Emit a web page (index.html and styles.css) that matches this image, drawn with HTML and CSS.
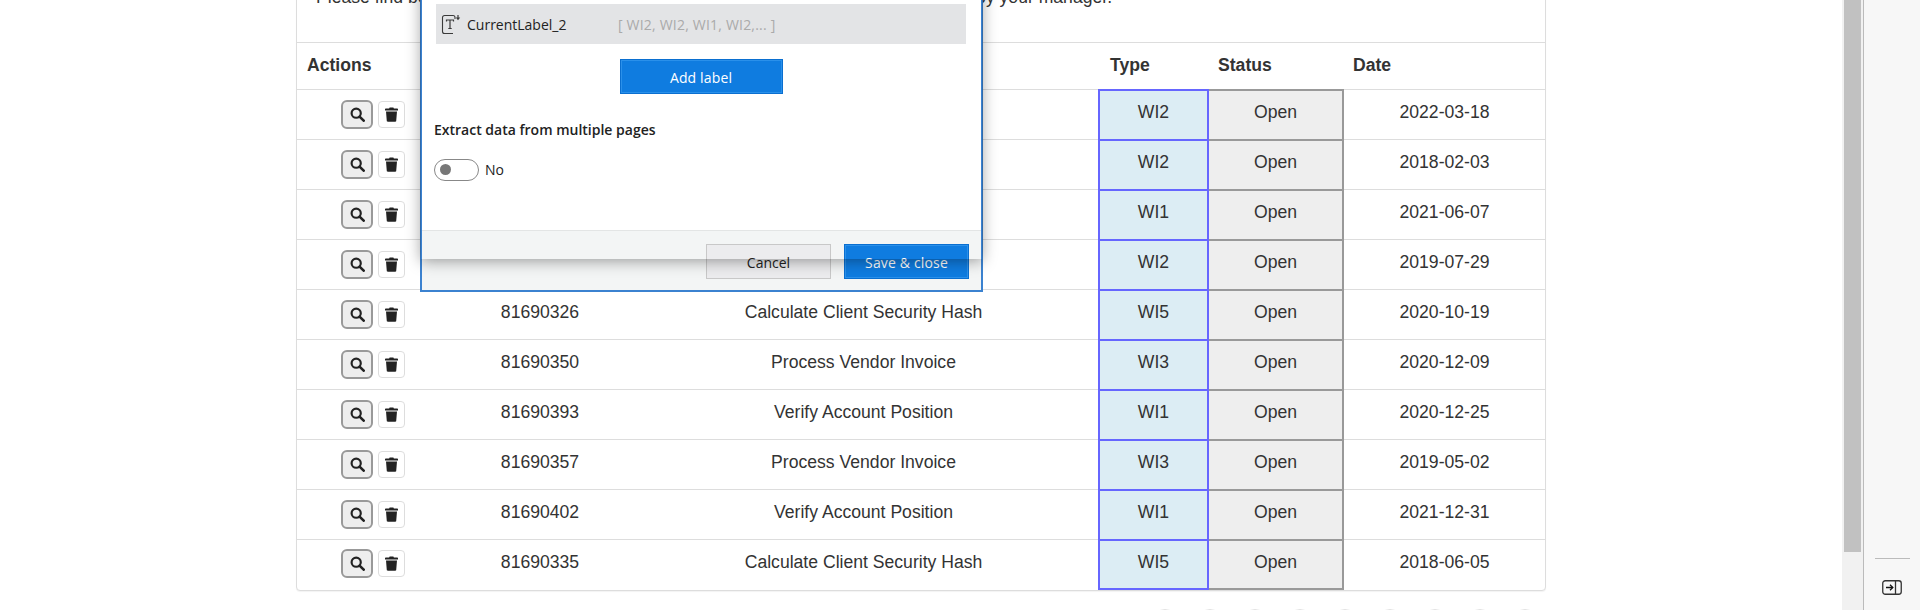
FILE: index.html
```html
<!DOCTYPE html>
<html lang="en">
<head>
<meta charset="UTF-8" />
<meta name="viewport" content="width=device-width, initial-scale=1" />
<title>Work Items</title>
<link rel="stylesheet" href="styles.css">
</head>
<body>

<svg class="icon-defs" aria-hidden="true">
  <symbol id="i-search" viewBox="0 0 16 16">
    <circle cx="6.6" cy="6.6" r="4.9" fill="none" stroke="currentColor" stroke-width="2.3" />
    <path d="M10.2 10.2 14.6 14.6" fill="none" stroke="currentColor" stroke-width="2.8" stroke-linecap="round" />
  </symbol>
  <symbol id="i-trash" viewBox="0 0 14 16">
    <path d="M5 0.4h4l0.6 1.2h3.6c0.5 0 0.8 0.3 0.8 0.8v1.3H0v-1.3c0-0.5 0.3-0.8 0.8-0.8h3.6z" fill="currentColor" />
    <path d="M1.1 4.7h11.8l-0.8 10c0 0.6-0.5 1-1 1H2.900c-0.500 0-1-0.400-1-1z" fill="currentColor" />
  </symbol>
</svg>

<div class="app">
  <main class="content">
    <div class="panel">
      <p class="intro">Please find below the list of all work items which were reviewed and assigned to you by your manager.</p>
      <table class="items">
        <colgroup>
          <col class="c-actions"><col class="c-id"><col class="c-name"><col class="c-type"><col class="c-status"><col class="c-date">
        </colgroup>
        <thead>
          <tr><th>Actions</th><th>ID</th><th>Name</th><th class="th-type">Type</th><th>Status</th><th>Date</th></tr>
        </thead>
        <tbody>
          <tr>
            <td><div class="actions"><button class="btn-view"><svg class="ico-search"><use href="#i-search" /></svg></button><button class="btn-del"><svg class="ico-trash"><use href="#i-trash" /></svg></button></div></td>
            <td>81690311</td><td>Process Vendor Invoice</td><td class="type">WI2</td><td class="status">Open</td><td>2022-03-18</td>
          </tr>
          <tr>
            <td><div class="actions"><button class="btn-view"><svg class="ico-search"><use href="#i-search" /></svg></button><button class="btn-del"><svg class="ico-trash"><use href="#i-trash" /></svg></button></div></td>
            <td>81690318</td><td>Process Vendor Invoice</td><td class="type">WI2</td><td class="status">Open</td><td>2018-02-03</td>
          </tr>
          <tr>
            <td><div class="actions"><button class="btn-view"><svg class="ico-search"><use href="#i-search" /></svg></button><button class="btn-del"><svg class="ico-trash"><use href="#i-trash" /></svg></button></div></td>
            <td>81690384</td><td>Verify Account Position</td><td class="type">WI1</td><td class="status">Open</td><td>2021-06-07</td>
          </tr>
          <tr>
            <td><div class="actions"><button class="btn-view"><svg class="ico-search"><use href="#i-search" /></svg></button><button class="btn-del"><svg class="ico-trash"><use href="#i-trash" /></svg></button></div></td>
            <td>81690342</td><td>Process Vendor Invoice</td><td class="type">WI2</td><td class="status">Open</td><td>2019-07-29</td>
          </tr>
          <tr>
            <td><div class="actions"><button class="btn-view"><svg class="ico-search"><use href="#i-search" /></svg></button><button class="btn-del"><svg class="ico-trash"><use href="#i-trash" /></svg></button></div></td>
            <td>81690326</td><td>Calculate Client Security Hash</td><td class="type">WI5</td><td class="status">Open</td><td>2020-10-19</td>
          </tr>
          <tr>
            <td><div class="actions"><button class="btn-view"><svg class="ico-search"><use href="#i-search" /></svg></button><button class="btn-del"><svg class="ico-trash"><use href="#i-trash" /></svg></button></div></td>
            <td>81690350</td><td>Process Vendor Invoice</td><td class="type">WI3</td><td class="status">Open</td><td>2020-12-09</td>
          </tr>
          <tr>
            <td><div class="actions"><button class="btn-view"><svg class="ico-search"><use href="#i-search" /></svg></button><button class="btn-del"><svg class="ico-trash"><use href="#i-trash" /></svg></button></div></td>
            <td>81690393</td><td>Verify Account Position</td><td class="type">WI1</td><td class="status">Open</td><td>2020-12-25</td>
          </tr>
          <tr>
            <td><div class="actions"><button class="btn-view"><svg class="ico-search"><use href="#i-search" /></svg></button><button class="btn-del"><svg class="ico-trash"><use href="#i-trash" /></svg></button></div></td>
            <td>81690357</td><td>Process Vendor Invoice</td><td class="type">WI3</td><td class="status">Open</td><td>2019-05-02</td>
          </tr>
          <tr>
            <td><div class="actions"><button class="btn-view"><svg class="ico-search"><use href="#i-search" /></svg></button><button class="btn-del"><svg class="ico-trash"><use href="#i-trash" /></svg></button></div></td>
            <td>81690402</td><td>Verify Account Position</td><td class="type">WI1</td><td class="status">Open</td><td>2021-12-31</td>
          </tr>
          <tr>
            <td><div class="actions"><button class="btn-view"><svg class="ico-search"><use href="#i-search" /></svg></button><button class="btn-del"><svg class="ico-trash"><use href="#i-trash" /></svg></button></div></td>
            <td>81690335</td><td>Calculate Client Security Hash</td><td class="type">WI5</td><td class="status">Open</td><td>2018-06-05</td>
          </tr>
        </tbody>
      </table>
    </div>
    <div class="pager">
      <span></span><span></span><span></span><span></span><span></span><span></span><span></span><span></span><span></span>
    </div>

    <div class="dialog">
      <div class="dialog-body">
        <div class="label-row">
          <svg class="ico-label" viewBox="0 0 20 21" fill="none" stroke="#3a3a3a">
            <path d="M14 5V3.500a2 2 0 0 0-2-2H3.500a2 2 0 0 0-2 2v14a2 2 0 0 0 2 2H12" stroke-width="1.100" />
            <path d="M5.500 7.500V6h7v1.500M9 6v8.500M7.300 14.500h3.400" stroke-width="1.200" />
            <path d="M17 1v3" stroke-width="1.200" />
            <path d="M14.800 3.500h4.400L17 6.200z" fill="#3a3a3a" stroke="none" />
          </svg>
          <span class="label-name">CurrentLabel_2</span>
          <span class="label-values">[ WI2, WI2, WI1, WI2,... ]</span>
        </div>
        <div class="add-wrap"><button class="btn-primary btn-add">Add label</button></div>
        <div class="field-title">Extract data from multiple pages</div>
        <div class="toggle-row">
          <span class="toggle"><span class="knob"></span></span>
          <span class="toggle-text">No</span>
        </div>
      </div>
      <div class="dialog-foot">
        <button class="btn-cancel">Cancel</button>
        <button class="btn-primary btn-save">Save &amp; close</button>
      </div>
      <div class="dialog-shade"></div>
    </div>
  </main>

  <div class="scrollbar"><div class="thumb"></div></div>

  <aside class="sidebar">
    <div class="side-rule"></div>
    <svg class="ico-collapse" viewBox="0 0 20 15" fill="none" stroke="#333">
      <rect x="0.750" y="0.750" width="18.500" height="13.500" rx="2.500" stroke-width="1.300" />
      <path d="M13.500 1v13" stroke-width="1.300" />
      <path d="M4 7.500h6.500" stroke="#111" stroke-width="1.500" />
      <path d="M8 4.800l2.800 2.700L8 10.200" stroke="#111" stroke-width="1.300" />
    </svg>
  </aside>
</div>

</body>
</html>
```

FILE: styles.css
```css
html, body {
  margin: 0;
  height: 100%;
  overflow: hidden;
}

body {
  font-family: "Liberation Sans", Arial, sans-serif;
  font-size: 17.6px;
  line-height: 22px;
  color: #333;
  background: #fff;
}

.icon-defs {
  display: none;
}

.app {
  display: flex;
  height: 610px;
}

.content {
  position: relative;
  flex: 1;
  min-width: 0;
  overflow: hidden;
}

/* page is scrolled a bit, the intro line is cut off on top */
.panel {
  width: 1248px;
  margin: -30px 0 0 296px;
  background: #fff;
  border: 1px solid #ddd;
  border-radius: 4px;
  box-shadow: 0 1px 1px rgba(0, 0, 0, 0.05);
}

.intro {
  margin: 0;
  height: 71px;
  padding: 15px 19px 0;
  box-sizing: border-box;
}

.items {
  width: 100%;
  table-layout: fixed;
  border-collapse: collapse;
}

.c-actions { width: 154px; }
.c-id { width: 178px; }
.c-name { width: 470px; }
.c-type { width: 109px; }
.c-status { width: 135px; }
.c-date { width: 202px; }

.items th {
  height: 47px;
  padding: 0 10px 2px;
  box-sizing: border-box;
  text-align: left;
  font-weight: 700;
  border-top: 1px solid #ddd;
  border-bottom: 1px solid #ddd;
}

.items th.th-type {
  padding-left: 11px;
}

.items td {
  height: 50px;
  padding: 0 10px 5px;
  box-sizing: border-box;
  text-align: center;
  border-top: 1px solid #ddd;
}

.items tr:last-child td {
  height: 49px;
  padding-bottom: 4px;
}

.items td:first-child,
.items tr:last-child td:first-child {
  padding: 0 12px 1px 10px;
}

.items td.type {
  background: #dcedf4;
  border: 2px solid #6666ff;
}

.items td.status {
  background: #eee;
  border: 2px solid #999;
}

.actions {
  display: flex;
  justify-content: center;
  align-items: center;
  gap: 5px;
}

.actions button {
  display: flex;
  align-items: center;
  justify-content: center;
  padding: 0;
  color: #222;
}

.btn-view {
  width: 32px;
  height: 29px;
  background: #eee;
  border: 2px solid #999;
  border-radius: 6px;
}

.btn-del {
  width: 27px;
  height: 27px;
  background: #fff;
  border: 1px solid #ddd;
  border-radius: 4px;
}

.ico-search {
  width: 15px;
  height: 15px;
}

.ico-trash {
  width: 13px;
  height: 15px;
}

.pager {
  display: flex;
  justify-content: flex-end;
  gap: 15px;
  width: 1244px;
  margin: 18px 0 0 296px;
}

.pager span {
  width: 28px;
  height: 28px;
  flex: none;
  border: 1px solid #e2e2e2;
  border-radius: 50%;
}

/* dialog sits over the table */
.dialog {
  position: absolute;
  top: 0;
  left: 420px;
  width: 563px;
  height: 292px;
  box-sizing: border-box;
  display: flex;
  flex-direction: column;
  background: #fff;
  border: 2px solid #3b82d0;
  border-top: none;
  font-family: "Open Sans", "Noto Sans", sans-serif;
  font-size: 14px;
  color: #222;
}

.dialog-body {
  flex: 1;
  padding: 4px 15px 0 12px;
}

.label-row {
  display: flex;
  align-items: center;
  height: 40px;
  margin-left: 2px;
  background: #e3e4e6;
}

.ico-label {
  width: 20px;
  height: 21px;
  margin: 0 6px 0 5px;
  flex: none;
}

.label-name {
  width: 151px;
  flex: none;
  padding-top: 1px;
}

.label-values {
  padding-top: 1px;
  color: #aaa;
  letter-spacing: 0.2px;
}

.add-wrap {
  display: flex;
  justify-content: center;
  margin: 15px 0 0 2px;
}

.btn-primary {
  height: 35px;
  padding: 2px 0 0;
  background: #0f7ce0;
  border: 1px solid #0a6fd0;
  box-shadow: inset 0 0 0 1px #2a90ea;
  color: #fff;
  font: inherit;
  letter-spacing: 0.15px;
}

.btn-add {
  width: 163px;
}

.field-title {
  margin-top: 25px;
  font-weight: 600;
}

.toggle-row {
  display: flex;
  align-items: center;
  gap: 6px;
  margin-top: 17px;
}

.toggle-text {
  padding-top: 1px;
}

.toggle {
  display: flex;
  align-items: center;
  width: 45px;
  height: 22px;
  box-sizing: border-box;
  padding-left: 5px;
  background: #fff;
  border: 1.5px solid #888;
  border-radius: 11px;
}

.knob {
  width: 11px;
  height: 11px;
  background: #777;
  border-radius: 50%;
}

.dialog-foot {
  display: flex;
  justify-content: flex-end;
  gap: 13px;
  height: 60px;
  box-sizing: border-box;
  padding: 13px 12px 0 0;
  background: #f3f5f5;
  border-top: 1px solid #e3e5e5;
}

.btn-cancel {
  width: 125px;
  height: 35px;
  padding: 2px 0 0;
  background: #ececee;
  border: 1px solid #c8c8c8;
  color: #222;
  font: inherit;
}

.btn-save {
  width: 125px;
}

.dialog-shade {
  position: absolute;
  top: -20px;
  left: -1px;
  right: -1px;
  height: 279px;
  box-shadow: 0 2px 14px rgba(0, 0, 0, 0.38);
  pointer-events: none;
}

.scrollbar {
  width: 17px;
  flex: none;
  padding: 0 2px;
  background: #f1f1f1;
}

.thumb {
  height: 552px;
  background: #c1c1c1;
}

.sidebar {
  width: 57px;
  flex: none;
  display: flex;
  flex-direction: column;
  align-items: center;
  box-sizing: border-box;
  background: #f7f7f7;
  border-left: 1px solid #bbb;
  padding-top: 558px;
}

.side-rule {
  width: 35px;
  height: 1px;
  background: #bbb;
}

.ico-collapse {
  width: 20px;
  height: 15px;
  margin-top: 21px;
}
```
